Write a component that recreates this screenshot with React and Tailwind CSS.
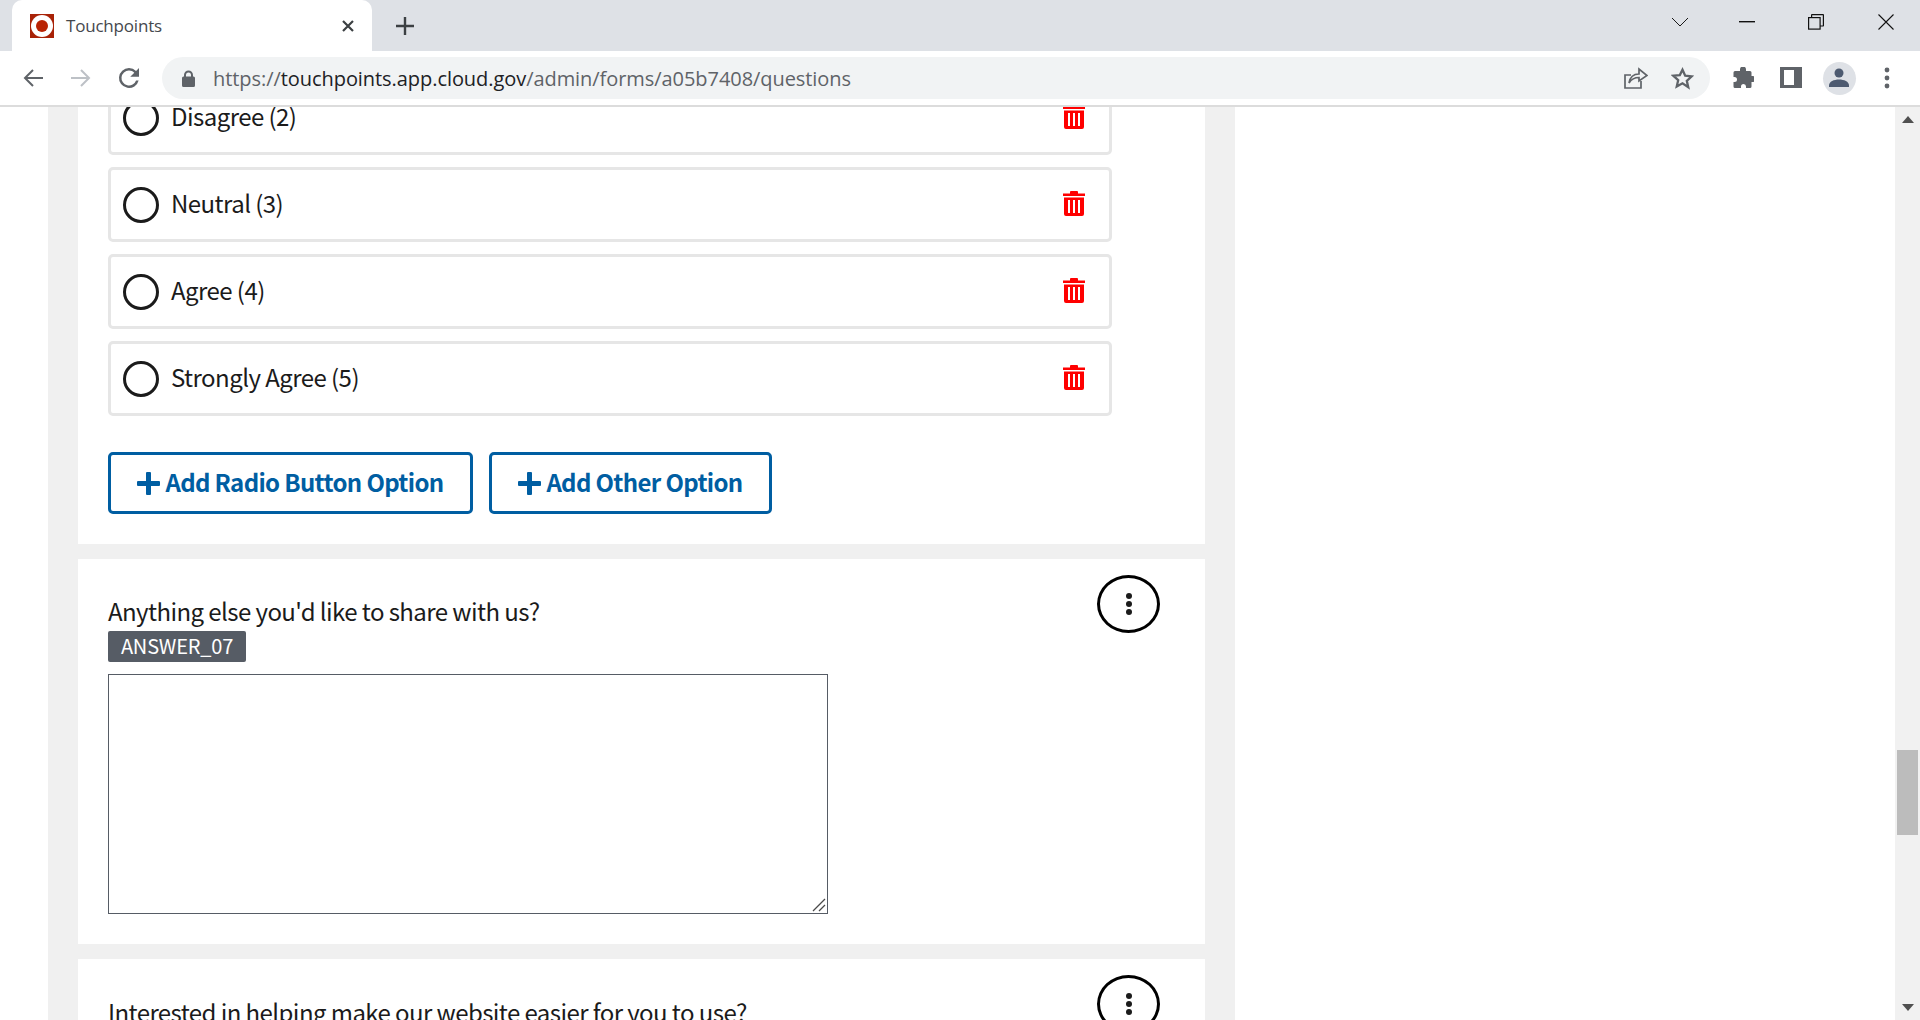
const sans = '"Noto Sans CJK SC", "Noto Sans", sans-serif';

function Trash() {
  return (
    <svg width="22" height="25" viewBox="0 0 22 25" fill="#ff0000" className="mt-[-2px]">
      <path d="M8 0h6a1 1 0 0 1 1 1v1.500h7V5H0V2.500h7V1a1 1 0 0 1 1-1z" />
      <path fillRule="evenodd" d="M1 6.500h20V23a2 2 0 0 1-2 2H3a2 2 0 0 1-2-2V6.500zM5 9v13h2V9H5zm5 0v13h2V9h-2zm5 0v13h2V9h-2z" />
    </svg>
  );
}

function Option({ label }) {
  return (
    <div className="flex h-[75px] w-[1004px] items-center rounded-[5px] border-[3px] border-[#e6e6e6] bg-white pl-[12px] pr-[24px]">
      <span className="h-[36px] w-[36px] shrink-0 rounded-full border-[3px] border-[#1b1b1b]" />
      <span className="mb-[4px] ml-[12px] flex-1 text-[24px] leading-[32px] tracking-[-0.55px] text-[#1b1b1b]">{label}</span>
      <Trash />
    </div>
  );
}

function Kebab() {
  return (
    <div className="flex h-[58px] w-[63px] flex-col items-center justify-center gap-[2px] rounded-[50%] border-[3px] border-black">
      <span className="h-[6px] w-[6px] rounded-full bg-[#1b1b1b]" />
      <span className="h-[6px] w-[6px] rounded-full bg-[#1b1b1b]" />
      <span className="h-[6px] w-[6px] rounded-full bg-[#1b1b1b]" />
    </div>
  );
}

function AddButton({ label, className }) {
  return (
    <button className={`flex h-[62px] items-center justify-center gap-[5px] rounded-[5px] border-[3px] border-[#005ea2] bg-white text-[24px] font-bold tracking-[-0.65px] text-[#005ea2] ${className}`}>
      <svg width="23" height="23" viewBox="0 0 23 23" fill="#005ea2">
        <rect x="9" y="0" width="5" height="23" rx="1" />
        <rect x="0" y="9" width="23" height="5" rx="1" />
      </svg>
      <span className="mb-[3px]">{label}</span>
    </button>
  );
}

function ToolbarIcon({ children }) {
  return <div className="flex h-[48px] w-[48px] items-center justify-center">{children}</div>;
}

function Chrome() {
  return (
    <div className="shrink-0" style={{ fontFamily: '"Open Sans", "Noto Sans", sans-serif' }}>
      <div className="flex h-[51px] items-stretch bg-[#dee1e6]">
        <div className="ml-[12px] flex h-[51px] w-[360px] items-center rounded-t-[10px] bg-white pl-[18px] pr-[17px]">
          <svg width="24" height="24" viewBox="0 0 24 24" className="shrink-0">
            <rect width="24" height="24" fill="#a82207" />
            <circle cx="12" cy="12" r="11" fill="#ffffff" />
            <circle cx="12" cy="12" r="6" fill="#b92304" />
          </svg>
          <span className="ml-[12px] flex-1 text-[17px] tracking-[-0.2px] text-[#45484d]">Touchpoints</span>
          <svg width="14" height="14" viewBox="0 0 14 14" stroke="#3c4043" strokeWidth="2.200" fill="none">
            <path d="M2 2l10 10M12 2L2 12" />
          </svg>
        </div>
        <div className="ml-[24px] flex items-center">
          <svg width="18" height="18" viewBox="0 0 18 18" stroke="#3c4043" strokeWidth="2.400" fill="none">
            <path d="M9 0v18M0 9h18" />
          </svg>
        </div>
        <div className="ml-auto flex items-center">
          <svg width="18" height="10" viewBox="0 0 18 10" stroke="#1a1a1a" fill="none" className="mr-[50px] mt-[-8px]">
            <path d="M1 1l8 8 8-8" />
          </svg>
          <svg width="16" height="2" viewBox="0 0 16 2" className="mr-[53px] mt-[-8px]">
            <rect width="16" height="1.400" fill="#111" />
          </svg>
          <svg width="16" height="16" viewBox="0 0 16 16" stroke="#111" strokeWidth="1.200" fill="none" className="mr-[54px] mt-[-8px]">
            <rect x="0.600" y="3.600" width="11.500" height="11.500" />
            <path d="M3.600 3.400V1a.4.4 0 0 1 .4-.4h11a.4.4 0 0 1 .4.4v10.600a.4.4 0 0 1-.4.4h-3" />
          </svg>
          <svg width="16" height="16" viewBox="0 0 16 16" stroke="#111" strokeWidth="1.100" fill="none" className="mr-[26px] mt-[-8px]">
            <path d="M0.500 0.500l15 15M15.500 0.500l-15 15" />
          </svg>
        </div>
      </div>
      <div className="flex h-[54px] items-center bg-white pl-[9px] pr-[9px]">
        <ToolbarIcon>
          <svg width="20" height="20" viewBox="0 0 20 20" stroke="#5f6368" strokeWidth="2" fill="none">
            <path d="M20 10H2M10 2l-8 8 8 8" />
          </svg>
        </ToolbarIcon>
        <ToolbarIcon>
          <svg width="20" height="20" viewBox="0 0 20 20" stroke="#bdc1c6" strokeWidth="2" fill="none">
            <path d="M0 10h18M10 2l8 8-8 8" />
          </svg>
        </ToolbarIcon>
        <ToolbarIcon>
          <svg width="30" height="30" viewBox="0 0 24 24" fill="#5f6368">
            <path d="M17.650 6.350A7.960 7.960 0 0 0 12 4a8 8 0 1 0 7.730 10h-2.080A6 6 0 1 1 12 6c1.660 0 3.140.690 4.220 1.780L13 11h7V4l-2.350 2.350z" />
          </svg>
        </ToolbarIcon>
        <div className="ml-[9px] flex h-[42px] w-[1548px] items-center rounded-full bg-[#f1f3f4] pl-[20px] pr-[16px]">
          <svg width="13" height="17" viewBox="0 0 13 17" fill="#5f6368" className="shrink-0">
            <path d="M2 6.500V5a4.500 4.500 0 0 1 9 0v1.500h.5A1.500 1.500 0 0 1 13 8v7.500a1.500 1.500 0 0 1-1.500 1.500h-10A1.500 1.500 0 0 1 0 15.500V8a1.500 1.500 0 0 1 1.500-1.500H2zm2 0h5V5a2.500 2.500 0 0 0-5 0v1.500z" />
          </svg>
          <span className="ml-[18px] mt-[1px] flex-1 text-[20px] tracking-[-0.06px] text-[#5f6368]">
            https://<span className="text-[#202124]">touchpoints.app.cloud.gov</span>/admin/forms/a05b7408/questions
          </span>
          <svg width="24" height="22" viewBox="0 0 24 22" stroke="#5f6368" strokeWidth="1.700" fill="none" className="mr-[23px]">
            <path d="M17 14v7H1V8h6" />
            <path d="M5 16c1-6 5-9 10-9V2l8 6.500L15 14V10.500c-4 0-7.500 1.500-10 5.500z" />
          </svg>
          <svg width="23" height="23" viewBox="0 0 24 24" stroke="#5f6368" strokeWidth="2.400" fill="none">
            <path d="M12 2.800l2.800 6.300 6.800.7-5.100 4.600 1.500 6.700L12 17l-6 3.400 1.500-6.700-5.100-4.600 6.800-.7z" />
          </svg>
        </div>
        <div className="ml-[9px] flex">
          <ToolbarIcon>
            <svg width="22" height="22" viewBox="0 0 22 22" fill="#5f6368">
              <path d="M8 2.500a3 3 0 0 1 6 0V4h4a1.500 1.500 0 0 1 1.500 1.500V9h1a3 3 0 0 1 0 6h-1v4.500A1.500 1.500 0 0 1 18 21h-4v-1.500a2.500 2.500 0 0 0-5 0V21H3a1.500 1.500 0 0 1-1.500-1.500V15h1a2.500 2.500 0 0 0 0-5h-1V5.500A1.500 1.500 0 0 1 3 4h5V2.500z" />
            </svg>
          </ToolbarIcon>
          <ToolbarIcon>
            <svg width="22" height="22" viewBox="0 0 22 22" fill="#5f6368">
              <path fillRule="evenodd" d="M0 0h22v21H0V0zm4 3v15h10V3H4z" />
            </svg>
          </ToolbarIcon>
          <ToolbarIcon>
            <div className="flex h-[33px] w-[33px] items-center justify-center rounded-full bg-[#dee1e6]">
              <svg width="20" height="20" viewBox="0 0 20 20" fill="#4d5a70">
                <circle cx="10" cy="5" r="4.500" />
                <path d="M0 17.500c0-4 5-6 10-6s10 2 10 6V19H0z" />
              </svg>
            </div>
          </ToolbarIcon>
          <ToolbarIcon>
            <svg width="6" height="22" viewBox="0 0 6 22" fill="#5f6368">
              <circle cx="3" cy="3" r="2.400" />
              <circle cx="3" cy="11" r="2.400" />
              <circle cx="3" cy="19" r="2.400" />
            </svg>
          </ToolbarIcon>
        </div>
      </div>
      <div className="h-[2px] bg-[#dcdcdc]" />
    </div>
  );
}

function Scrollbar() {
  return (
    <div className="flex h-full w-[25px] shrink-0 flex-col items-center justify-between bg-[#f1f1f1] py-[9px]">
      <svg width="12" height="7" viewBox="0 0 12 7" fill="#505050"><path d="M6 0l6 7H0z" /></svg>
      <svg width="12" height="7" viewBox="0 0 12 7" fill="#505050"><path d="M0 0h12L6 7z" /></svg>
    </div>
  );
}

export default function App() {
  return (
    <div className="flex h-[1020px] w-[1920px] flex-col overflow-hidden bg-white" style={{ fontFamily: sans }}>
      <Chrome />
      <div className="relative flex min-h-0 flex-1">
        <div className="min-w-0 flex-1 overflow-hidden">
          <div className="ml-[48px] mt-[-27px] w-[1187px] bg-[#f0f0f0] px-[30px]">
            <div className="flex flex-col bg-white pb-[30px] pl-[30px]">
              <div className="flex flex-col gap-[12px]">
                <Option label="Disagree (2)" />
                <Option label="Neutral (3)" />
                <Option label="Agree (4)" />
                <Option label="Strongly Agree (5)" />
              </div>
              <div className="mt-[36px] flex gap-[16px]">
                <AddButton label="Add Radio Button Option" className="w-[365px]" />
                <AddButton label="Add Other Option" className="w-[283px]" />
              </div>
            </div>
            <div className="mt-[15px] bg-white pb-[30px] pl-[30px] pr-[45px] pt-[16px]">
              <div className="flex justify-end">
                <Kebab />
              </div>
              <div className="mt-[-38px] text-[24px] leading-[32px] tracking-[-0.57px] text-[#1b1b1b]">Anything else you'd like to share with us?</div>
              <div className="mt-[4px] flex h-[31px] w-[138px] items-center justify-center rounded-[2px] bg-[#565c65] pb-[1px] text-[20px] tracking-[-0.2px] text-white">ANSWER_07</div>
              <div className="relative mt-[12px] h-[240px] w-[720px]">
                <textarea className="block h-full w-full resize-none border border-[#565c65] bg-white" />
                <svg width="14" height="14" viewBox="0 0 14 14" stroke="#4a4a4a" strokeWidth="1.300" fill="none" className="absolute bottom-[2px] right-[2px]">
                  <path d="M1 13L13 1M7 13l6-6" />
                </svg>
              </div>
            </div>
            <div className="mt-[15px] bg-white pb-[30px] pl-[30px] pr-[45px] pt-[16px]">
              <div className="flex justify-end">
                <Kebab />
              </div>
              <div className="mt-[-37px] whitespace-nowrap text-[24px] leading-[32px] tracking-[-0.57px] text-[#1b1b1b]">Interested in helping make our website easier for you to use?</div>
            </div>
          </div>
        </div>
        <Scrollbar />
        <div className="absolute bottom-[185px] right-[2px] h-[85px] w-[21px] bg-[#bcbcbc]" />
      </div>
    </div>
  );
}
